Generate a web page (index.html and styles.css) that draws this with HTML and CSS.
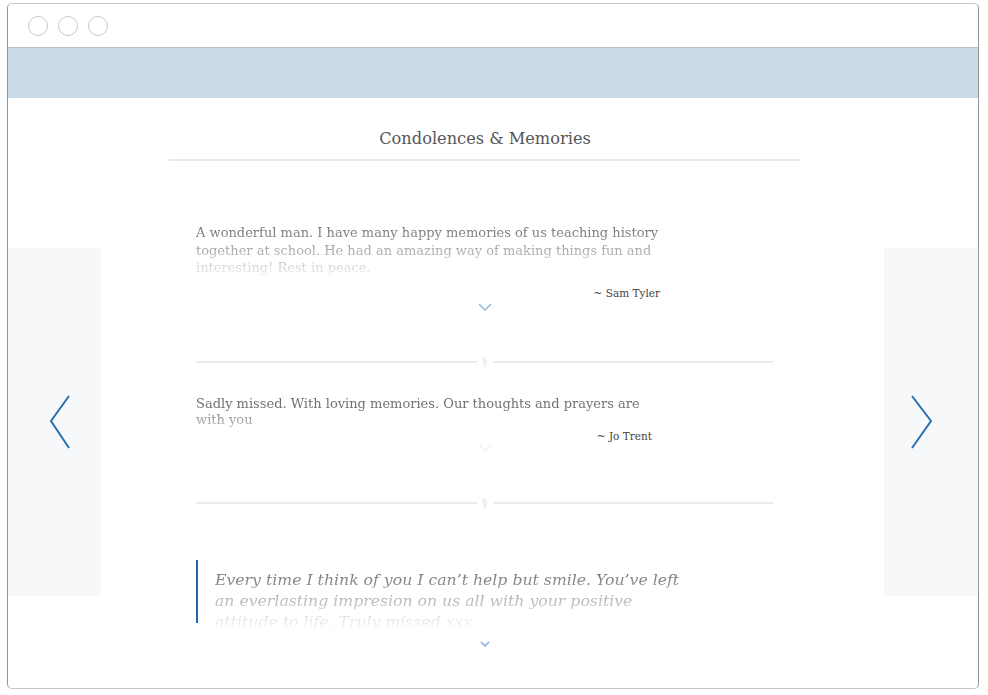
FILE: index.html
```html
<!DOCTYPE html>
<html>
<head>
<meta charset="utf-8">
<link rel="stylesheet" href="styles.css">
</head>
<body>
<div class="window">
  <div class="titlebar">
    <span class="dot"></span><span class="dot"></span><span class="dot"></span>
  </div>
  <div class="band"></div>
  <div class="main">
    <div class="side side-left">
      <svg class="arrow" width="24" height="56" viewBox="0 0 24 56"><polyline points="20,2 2,27 20,54" fill="none" stroke="#2b6eb4" stroke-width="2"/></svg>
    </div>
    <div class="center">
      <h1 class="title">Condolences &amp; Memories</h1>
      <div class="list">
        <div class="entry entry-one">
          <p class="msg">A wonderful man. I have many happy memories of us teaching history together at school. He had an amazing way of making things fun and interesting! Rest in peace.</p>
          <div class="author">~ Sam Tyler</div>
          <svg class="more" width="14" height="8" viewBox="0 0 14 8"><polyline points="1,1 7,7 13,1" fill="none" stroke="#8db3da" stroke-width="1.4"/></svg>
        </div>
        <div class="divider"><span class="line"></span><span class="sect">§</span><span class="line"></span></div>
        <div class="entry entry-two">
          <p class="msg">Sadly missed. With loving memories. Our thoughts and prayers are with you</p>
          <div class="author">~ Jo Trent</div>
          <svg class="more faint" width="14" height="8" viewBox="0 0 14 8"><polyline points="1,1 7,7 13,1" fill="none" stroke="#eef1f4" stroke-width="1.4"/></svg>
        </div>
        <div class="divider divider-two"><span class="line"></span><span class="sect">§</span><span class="line"></span></div>
        <div class="entry entry-quote">
          <blockquote class="quote"><div class="quote-text">Every time I think of you I can’t help but smile. You’ve left an everlasting impresion on us all with your positive attitude to life. Truly missed xxx</div></blockquote>
          <svg class="more small" width="10" height="6" viewBox="0 0 10 6"><polyline points="1,1 5,5 9,1" fill="none" stroke="#7aa8d6" stroke-width="1.4"/></svg>
        </div>
      </div>
    </div>
    <div class="side side-right">
      <svg class="arrow" width="24" height="56" viewBox="0 0 24 56"><polyline points="2,2 21,27 2,54" fill="none" stroke="#2b6eb4" stroke-width="2"/></svg>
    </div>
  </div>
</div>
</body>
</html>
```

FILE: styles.css
```css
* { box-sizing: border-box; }
html, body { margin: 0; padding: 0; background: #fff; }
body { font-family: "DejaVu Serif", Georgia, serif; }

.window {
  margin: 3px 0 0 7px;
  width: 972px;
  height: 686px;
  border: 1px solid #949494;
  border-top-color: #c9c9c9;
  border-bottom-color: #c4c4c4;
  border-radius: 5px;
  overflow: hidden;
  display: flex;
  flex-direction: column;
}

.titlebar {
  height: 44px;
  flex: none;
  border-bottom: 1px solid #bdbdbd;
  display: flex;
  align-items: center;
  gap: 10px;
  padding-left: 20px;
}
.dot {
  width: 20px;
  height: 20px;
  border: 1px solid #c8c8c8;
  border-radius: 50%;
}

.band {
  height: 50px;
  flex: none;
  background: #c9dbe8;
}

.main {
  flex: 1;
  display: grid;
  grid-template-columns: 93px 1fr 94px;
  align-items: start;
  min-height: 0;
}

.side {
  margin-top: 150px;
  height: 348px;
  background: #f7f8fa;
  display: flex;
  align-items: center;
  justify-content: center;
}
.side-left .arrow { margin-left: 12px; }
.side-right .arrow { margin-left: -18px; }

.center {
  padding-left: 68px;
  min-width: 0;
}
.title {
  width: 632px;
  margin: 29px 0 0;
  padding-bottom: 8px;
  border-bottom: 2px solid #e6e9ed;
  text-align: center;
  font-weight: normal;
  font-size: 16.2px;
  line-height: 24px;
  color: #555;
}

.list {
  width: 632px;
  padding: 0 28px 0 27px;
}

.entry { display: flex; flex-direction: column; }
.msg {
  margin: 0;
  font-size: 13px;
  line-height: 17.5px;
  color: #6a6a6a;
  -webkit-mask-image: linear-gradient(to bottom, rgba(0,0,0,1) 0%, rgba(0,0,0,0.55) 50%, rgba(0,0,0,0.08) 100%);
          mask-image: linear-gradient(to bottom, rgba(0,0,0,1) 0%, rgba(0,0,0,0.55) 50%, rgba(0,0,0,0.08) 100%);
}
.entry-one { margin-top: 63px; }
.entry-one .msg { width: 466px; }
.author {
  font-size: 10.5px;
  color: #444;
  text-align: right;
  line-height: 14px;
}
.entry-one .author { width: 464px; margin-top: 9px; }
.more { align-self: center; }
.entry-one .more { margin-top: 3px; }

.divider {
  display: flex;
  align-items: center;
  gap: 5px;
  margin-top: 45px;
}
.divider .line { flex: 1; height: 2px; background: #e9ecef; }
.divider .sect { font-family: "Liberation Serif", serif; font-size: 12px; color: #dfe4ea; line-height: 12px; }

.entry-two { margin-top: 28px; }
.entry-two .msg {
  width: 460px;
  line-height: 16.5px;
  -webkit-mask-image: linear-gradient(to bottom, rgba(0,0,0,1) 0%, rgba(0,0,0,0.9) 45%, rgba(0,0,0,0.35) 100%);
          mask-image: linear-gradient(to bottom, rgba(0,0,0,1) 0%, rgba(0,0,0,0.9) 45%, rgba(0,0,0,0.35) 100%);
}
.entry-two .author { width: 456px; margin-top: 0; }
.entry-two .more { margin-top: 1px; }
.divider-two { margin-top: 45px; }

.entry-quote { margin-top: 51px; }
.quote {
  margin: 0;
  border-left: 2px solid #1e66ad;
  padding: 9px 0 0 17px;
  width: 500px;
  border-image: linear-gradient(to bottom, #1e66ad 0, #1e66ad 62px, transparent 62px) 1;
}
.quote-text {
  font-style: italic;
  font-size: 15.7px;
  line-height: 21px;
  color: #6a6a6a;
  width: 480px;
  -webkit-mask-image: linear-gradient(to bottom, rgba(0,0,0,1) 0%, rgba(0,0,0,0.5) 45%, rgba(0,0,0,0.08) 90%);
          mask-image: linear-gradient(to bottom, rgba(0,0,0,1) 0%, rgba(0,0,0,0.5) 45%, rgba(0,0,0,0.08) 90%);
}
.entry-quote .more { margin-top: 9px; }
```
